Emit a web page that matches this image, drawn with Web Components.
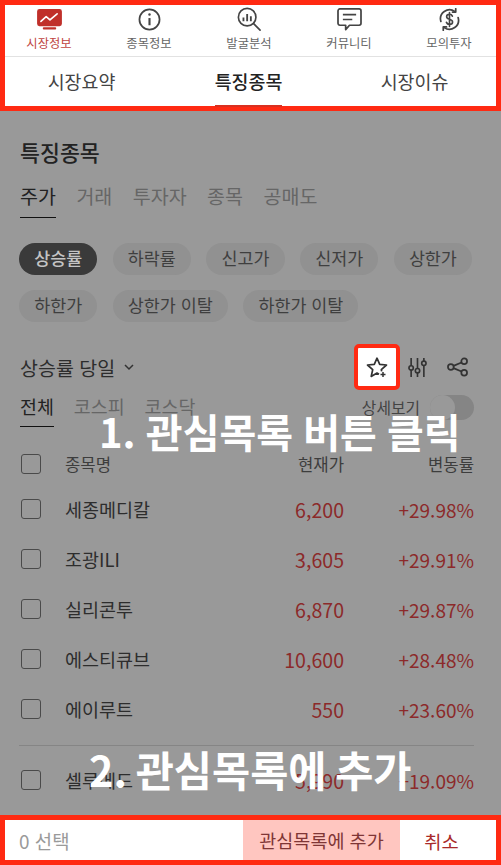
<!DOCTYPE html>
<html lang="ko">
<head>
<meta charset="utf-8">
<style>
  html, body { margin: 0; padding: 0; }
  body {
    width: 501px;
    height: 865px;
    overflow: hidden;
    background: #999999;
    font-family: "Noto Sans CJK KR", "Noto Sans", sans-serif;
  }
</style>
</head>
<body>
<market-app></market-app>
<script>
const ICONS = {
  market: `<svg width="25" height="21" viewBox="0 0 26 22"><path d="M2.500 0h21A2.500 2.500 0 0 1 26 2.500v13a2.500 2.500 0 0 1-2.500 2.500H2.500A2.500 2.500 0 0 1 0 15.500v-13A2.500 2.500 0 0 1 2.500 0z" fill="#c0302a"/><rect x="6" y="19" width="14" height="2.500" rx="1" fill="#c0302a"/><path d="M4 13l5.500-5 4 3.500L21 5" fill="none" stroke="#fff" stroke-width="1.700" stroke-linecap="round" stroke-linejoin="round"/></svg>`,
  info: `<svg width="23" height="23" viewBox="0 0 24 24" fill="none" stroke="#444" stroke-width="1.800"><circle cx="12" cy="12" r="10.500"/><path d="M12 10.500V18" stroke-width="2.200"/><circle cx="12" cy="6.800" r="1.300" fill="#444" stroke="none"/></svg>`,
  search: `<svg width="24" height="24" viewBox="0 0 26 26" fill="none" stroke="#444" stroke-width="1.800"><circle cx="11" cy="11" r="9.500"/><path d="M18 18l7 7" stroke-linecap="round"/><path d="M7 11.500v4M11 7.500v8M15 10v5.500" stroke-width="2"/></svg>`,
  chat: `<svg width="25" height="23" viewBox="0 0 26 24" fill="none" stroke="#444" stroke-width="1.800" stroke-linejoin="round"><path d="M3 1h20a2 2 0 0 1 2 2v13a2 2 0 0 1-2 2H13l-4 4.500V18H3a2 2 0 0 1-2-2V3a2 2 0 0 1 2-2z"/><path d="M7 7h12M7 12h8" stroke-linecap="square"/></svg>`,
  money: `<svg width="23" height="23" viewBox="0 0 24 24" fill="none" stroke="#444" stroke-width="1.800" stroke-linecap="round"><path d="M3 14A9.500 9.500 0 0 1 17.500 3.500M21 10a9.500 9.500 0 0 1-14.500 10.500"/><path d="M18.500 0.800v3.400h-3.400M5.500 23.200v-3.400h3.400" stroke-linejoin="round"/><path d="M15 8.500c-.5-1.300-1.600-2-3-2-1.800 0-3 1-3 2.600 0 3.400 6.200 1.900 6.200 5.400 0 1.600-1.300 2.600-3.200 2.600-1.500 0-2.700-.8-3.200-2.100M12 4.800v14.400" stroke-width="1.700"/></svg>`,
  star: `<svg width="22" height="21" viewBox="0 0 22 21" fill="none" stroke="#333" stroke-width="1.700" stroke-linejoin="round"><path d="M13 17.200l-2-1.200-5.800 3.400 1.500-6.700L1.500 8l6.800-.6L11 1.200l2.700 6.200 6.800.6-5.200 4.700.4 1.700"/><path d="M17 15v5M14.500 17.500h5" stroke-width="1.500"/></svg>`,
  sliders: `<svg width="19" height="20" viewBox="0 0 20 22" fill="none" stroke="#333" stroke-width="1.800"><path d="M3 1v21M10 1v21M17 1v21"/><circle cx="3" cy="12" r="2.400" fill="#999"/><circle cx="10" cy="15" r="2.400" fill="#999"/><circle cx="17" cy="7" r="2.400" fill="#999"/></svg>`,
  share: `<svg width="21" height="20" viewBox="0 0 22 20" fill="none" stroke="#333" stroke-width="1.800"><circle cx="4" cy="10" r="3"/><circle cx="18" cy="4" r="3"/><circle cx="18" cy="16" r="3"/><path d="M6.800 8.800l8.400-3.600M6.800 11.200l8.400 3.600"/></svg>`
};

class TopNav extends HTMLElement {
  constructor() {
    super();
    const root = this.attachShadow({mode: 'open'});
    const items = [
      ['market', '시장정보', true], ['info', '종목정보'], ['search', '발굴분석'],
      ['chat', '커뮤니티'], ['money', '모의투자']
    ];
    const tabs = [['시장요약'], ['특징종목', true], ['시장이슈']];
    root.innerHTML = `<style>
    :host {
      display: block;
      box-sizing: border-box;
      height: 111px;
      border: 5px solid #ff2a12;
      background: #fff;
    }
    .icons {
      height: 51px;
      border-bottom: 1px solid #e2e2e2;
    }
    .cols {
      display: grid;
      grid-template-columns: repeat(5, 100px);
      margin: 0 -5px 0 -6px;
    }
    .item {
      display: flex;
      flex-direction: column;
      align-items: center;
      font-size: 12.300px;
      line-height: 16px;
      color: #666;
    }
    .item.on { color: #c0453f; }
    .icon {
      height: 26px;
      margin: 1px 0 3px;
      display: flex;
      align-items: center;
    }
    .tabs {
      display: grid;
      grid-template-columns: 167px 167px 165px;
      height: 50px;
      margin: 0 -6px 0 -7px;
    }
    .tab {
      display: flex;
      justify-content: center;
      font-size: 18.400px;
      color: #444;
    }
    .tab span { display: inline-flex; align-items: center; box-sizing: border-box; height: 100%; border-bottom: 2px solid transparent; }
    .tab.on { color: #222; font-weight: 500; }
    .tab.on span { border-bottom-color: #d9301f; }
    </style>
    <div class="icons"><div class="cols">${items.map(([icon, label, on]) =>
      `<div class="item ${on ? 'on' : ''}"><div class="icon">${ICONS[icon]}</div>${label}</div>`).join('')}</div></div>
    <div class="tabs">${tabs.map(([label, on]) =>
      `<div class="tab ${on ? 'on' : ''}"><span>${label}</span></div>`).join('')}</div>`;
  }
}
customElements.define('top-nav', TopNav);

class FilterChips extends HTMLElement {
  constructor() {
    super();
    const root = this.attachShadow({mode: 'open'});
    const chips = ['상승률', '하락률', '신고가', '신저가', '상한가', '하한가', '상한가 이탈', '하한가 이탈'];
    root.innerHTML = `<style>
    :host { display: flex; flex-wrap: wrap; gap: 15px 15.300px; margin: 0 0 0 -1px; }
    div {
      height: 32px;
      line-height: 29px;
      padding: 0 15.200px;
      border-radius: 16px;
      background: #919191;
      color: #3f3f3f;
      font-size: 17.400px;
    }
    div.on { background: #3a3a3a; color: #c4c4c4; font-weight: 500; }
    </style>${chips.map((c, i) => `<div class="${i === 0 ? 'on' : ''}">${c}</div>`).join('')}`;
  }
}
customElements.define('filter-chips', FilterChips);

class StockRow extends HTMLElement {
  constructor() {
    super();
    const root = this.attachShadow({mode: 'open'});
    root.innerHTML = `<style>
    :host {
      display: grid;
      grid-template-columns: 45px 1fr 100px 130px;
      align-items: center;
      height: 50px;
      color: #8c2a2a;
      font-size: 19px;
    }
    :host([head]) { height: 41px; color: #3d3d3d; font-size: 16.700px; }
    :host([head]) .name { color: #3d3d3d; font-size: 16.700px; }
    .box {
      width: 20px;
      height: 20px;
      border: 1.500px solid #4a4a4a;
      border-radius: 3px;
      box-sizing: border-box;
      margin-left: 1px;
    }
    .name { color: #2d2d2d; font-size: 18.500px; white-space: nowrap; }
    .num { text-align: right; }
    .price { font-size: 1.030em; }
    :host([head]) .price { font-size: 1em; }
    </style>
    <div class="box"></div>
    <div class="name"><slot name="name"></slot></div>
    <div class="num price"><slot name="price"></slot></div>
    <div class="num"><slot name="rate"></slot></div>`;
  }
}
customElements.define('stock-row', StockRow);

class StockBoard extends HTMLElement {
  constructor() {
    super();
    const root = this.attachShadow({mode: 'open'});
    const rows = [
      ['세종메디칼', '6,200', '+29.98%'], ['조광ILI', '3,605', '+29.91%'],
      ['실리콘투', '6,870', '+29.87%'], ['에스티큐브', '10,600', '+28.48%'],
      ['에이루트', '550', '+23.60%']
    ];
    const row = r => `<stock-row><span slot="name">${r[0]}</span><span slot="price">${r[1]}</span><span slot="rate">${r[2]}</span></stock-row>`;
    root.innerHTML = `<style>
    :host { display: block; flex: 1; padding: 0 27px 0 20px; overflow: hidden; }
    h2 { margin: 26px 0 0; height: 30px; line-height: 30px; font-size: 21.700px; font-weight: 500; color: #222; }
    .sub { display: flex; gap: 20.500px; margin-top: 14px; height: 37px; font-size: 19.500px; color: #666; line-height: 30px; }
    .sub span:first-child { color: #222; border-bottom: 1px solid #111; height: 36px; }
    filter-chips { margin-top: 25px; }
    .filter { display: flex; align-items: center; height: 46px; margin-top: 22px; }
    .filter b { font-weight: 400; font-size: 19.500px; color: #2d2d2d; display: flex; align-items: center; gap: 9px; }
    .tools { margin-left: auto; display: flex; align-items: center; margin-right: 6px; }
    .star {
      width: 46px; height: 46px; box-sizing: border-box;
      border: 4px solid #ff2a12; border-radius: 5px; background: #fff;
      display: flex; align-items: center; justify-content: center;
    }
    .sliders { margin-left: 8px; display: flex; }
    .share { margin-left: 20px; display: flex; }
    .market { display: flex; align-items: flex-start; gap: 20px; height: 49px; margin-top: 4px; font-size: 18.400px; color: #666; line-height: 25px; }
    .market span:first-child { color: #222; border-bottom: 1px solid #111; height: 32px; }
    .detail { margin-left: auto; display: flex; align-items: center; gap: 10px; font-size: 15.800px; color: #444; height: 25px; margin-top: 1px; }
    .toggle { width: 44px; height: 25px; border-radius: 13px; background: #858585; position: relative; }
    .toggle::before { content: ''; position: absolute; left: 0; top: 0; width: 25px; height: 25px; border-radius: 50%; background: #999; }
    hr { border: 0; border-top: 1px solid #858585; margin: 11px 0 9px -1px; }
    </style>
    <h2>특징종목</h2>
    <div class="sub"><span>주가</span><span>거래</span><span>투자자</span><span>종목</span><span>공매도</span></div>
    <filter-chips></filter-chips>
    <div class="filter">
      <b>상승률 당일 <svg width="10" height="7" viewBox="0 0 10 7" fill="none" stroke="#333" stroke-width="1.500"><path d="M1 1l4 4 4-4"/></svg></b>
      <div class="tools">
        <div class="star">${ICONS.star}</div>
        <div class="sliders">${ICONS.sliders}</div>
        <div class="share">${ICONS.share}</div>
      </div>
    </div>
    <div class="market">
      <span>전체</span><span>코스피</span><span>코스닥</span>
      <div class="detail">상세보기<div class="toggle"></div></div>
    </div>
    <stock-row head><span slot="name">종목명</span><span slot="price">현재가</span><span slot="rate">변동률</span></stock-row>
    ${rows.map(row).join('')}
    <hr>
    ${row(['셀루메드', '5,990', '+19.09%'])}`;
  }
}
customElements.define('stock-board', StockBoard);

class ActionBar extends HTMLElement {
  constructor() {
    super();
    this.attachShadow({mode: 'open'}).innerHTML = `<style>
    :host {
      display: flex;
      box-sizing: border-box;
      height: 50px;
      border: 5px solid #ff2a12;
      background: #fff;
      align-items: stretch;
    }
    div { display: flex; align-items: center; justify-content: center; }
    .count { flex: 1; justify-content: flex-start; padding-left: 14px; font-size: 18.900px; color: #9a9a9a; }
    .add { width: 157px; background: #ffc6c0; color: #7f3636; font-size: 18.500px; }
    .cancel { width: 83px; padding-right: 13px; color: #a92a2a; font-size: 18.700px; }
    </style>
    <div class="count">0 선택</div>
    <div class="add">관심목록에 추가</div>
    <div class="cancel">취소</div>`;
  }
}
customElements.define('action-bar', ActionBar);

class MarketApp extends HTMLElement {
  constructor() {
    super();
    this.attachShadow({mode: 'open'}).innerHTML = `<style>
    :host { display: flex; flex-direction: column; width: 501px; height: 865px; position: relative; overflow: hidden; }
    .note {
      position: absolute;
      color: #fff;
      font-weight: 700;
      line-height: 50px;
      white-space: nowrap;
    }
    .one { top: 406px; left: 99px; font-size: 40px; word-spacing: -1px; }
    .two { top: 744px; left: 89px; font-size: 41.500px; word-spacing: -3px; }
    </style>
    <top-nav></top-nav>
    <stock-board></stock-board>
    <action-bar></action-bar>
    <div class="note one">1. 관심목록 버튼 클릭</div>
    <div class="note two">2. 관심목록에 추가</div>`;
  }
}
customElements.define('market-app', MarketApp);
</script>
</body>
</html>
